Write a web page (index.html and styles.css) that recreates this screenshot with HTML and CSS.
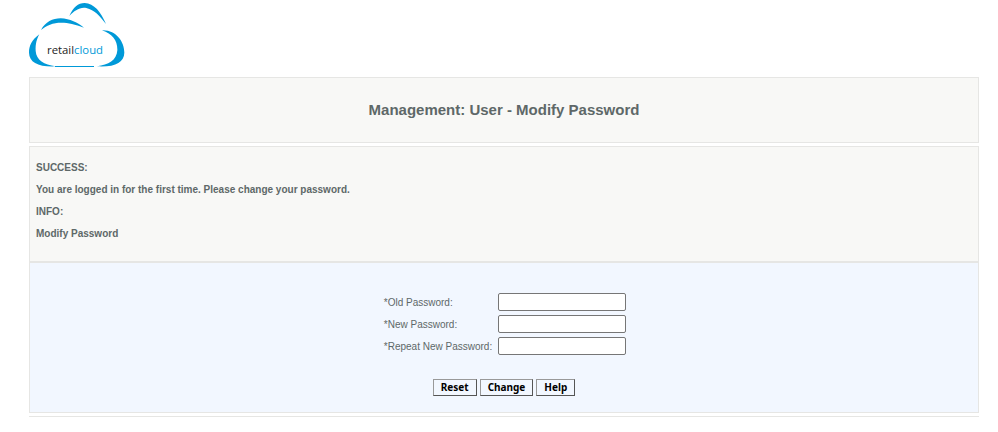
FILE: index.html
```html
<!DOCTYPE html>
<html lang="en">

<head>
    <meta charset="UTF-8">
    <meta name="viewport" content="width=device-width, initial-scale=1.0">
    <title>Management: User - Modify Password</title>
    <link rel="stylesheet" href="styles.css">
</head>

<body>

    <header>
        <svg class="logo" viewBox="27 9 288 192" role="img" aria-label="retailcloud">
            <g fill="#0099d8">
                <path d="M148 48 C160 22 174 9 194 9 C222 10 243 36 258 72 C238 47 224 30 199 24 C180 20 163 32 148 48 Z" />
                <path d="M63 90 C76 66 98 55 122 55 C150 56 173 68 192 83 C164 73 146 68 124 68 C99 68 79 76 63 90 Z" />
                <path d="M58 103 C35 120 27 138 27 158 C28 188 55 201 107 199 C72 194 49 181 47 153 C46 132 50 118 58 103 Z" />
                <path d="M105 198 L222 198 L222 201 L105 201 Z" />
                <path d="M246 91 C288 89 313 125 313 158 C312 187 285 202 231 199 C265 194 290 182 292 151 C293 122 278 102 246 91 Z" />
            </g>
            <text class="logo_text" x="81" y="162">retail<tspan class="logo_cloud">cloud</tspan></text>
        </svg>
    </header>

    <main>
        <section class="box title">
            <h1>Management: User - Modify Password</h1>
        </section>

        <section class="box messages">
            <p>SUCCESS:</p>
            <p>You are logged in for the first time. Please change your password.</p>
            <p>INFO:</p>
            <p>Modify Password</p>
        </section>

        <form class="box password_form">
            <div class="fields">
                <label for="old_password">*Old Password:</label>
                <input type="password" id="old_password">
                <label for="new_password">*New Password:</label>
                <input type="password" id="new_password">
                <label for="repeat_password">*Repeat New Password:</label>
                <input type="password" id="repeat_password">
            </div>
            <div class="buttons">
                <button type="reset">Reset</button>
                <button type="submit">Change</button>
                <button type="button">Help</button>
            </div>
        </form>
    </main>

    <footer></footer>

</body>

</html>
```

FILE: styles.css
```css
* {
    box-sizing: border-box;
}

body {
    margin: 0 19px 0 29px;
    padding-top: 3px;
    background-color: #fff;
    color: #5e6868;
    font-family: "Liberation Sans", Arial, sans-serif;
    font-size: 10px;
}

.logo {
    display: block;
    width: 96px;
    height: 64px;
    margin-bottom: 10px;
}

.logo_text {
    font-family: "Open Sans", sans-serif;
    font-size: 34px;
    fill: #222;
}

.logo_cloud {
    fill: #0099d8;
}

.box {
    border: 1px solid #e6e6e4;
    background-color: #f8f8f6;
}

.title {
    margin-bottom: 3px;
    padding: 22px 0;
    text-align: center;
}

h1 {
    margin: 0;
    font-size: 15px;
    line-height: 20px;
}

.messages {
    padding: 10px 6px 16px;
}

.messages p {
    margin: 0;
    font-weight: bold;
    line-height: 22px;
}

.password_form {
    display: flex;
    flex-direction: column;
    align-items: center;
    padding: 30px 0 16px;
    background-color: #f2f7ff;
}

.fields {
    display: grid;
    grid-template-columns: auto 128px;
    gap: 4px 6px;
    align-items: center;
    padding-left: 2px;
}

input {
    width: 100%;
    height: 18px;
    border: 1px solid #767676;
    border-radius: 2px;
    background-color: #fff;
}

.buttons {
    display: flex;
    gap: 3px;
    margin-top: 24px;
}

button {
    height: 17px;
    padding: 0 7px;
    border: 1px solid #555;
    border-top-color: #999;
    border-left-color: #999;
    background-color: #f2f7ff;
    color: #000;
    font-family: "Noto Sans", sans-serif;
    font-size: 10px;
    font-weight: bold;
    line-height: 15px;
}

footer {
    margin-top: 3px;
    border-top: 1px solid #e6e6e4;
}
```
